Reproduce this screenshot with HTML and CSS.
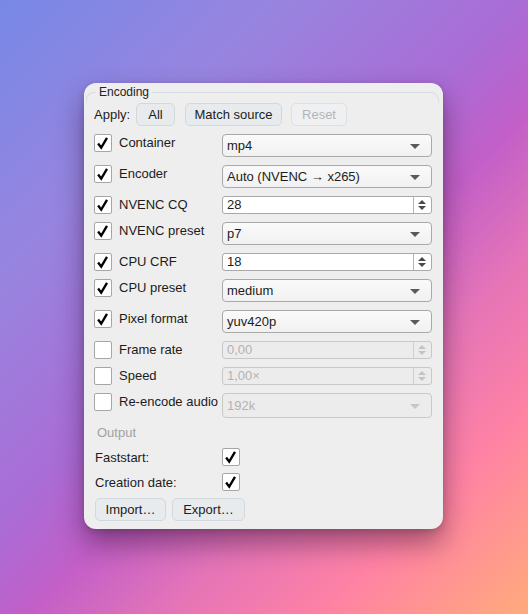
FILE: index.html
```html
<!DOCTYPE html>
<html lang="en">
<head>
    <meta charset="UTF-8">
    <meta name="viewport" content="width=device-width, initial-scale=1.0">
    <title>Encoding</title>
    <link rel="stylesheet" href="styles.css">
</head>
<body>
    <div class="panel">
        <div class="group-head">
            <span class="group-line left"></span>
            <span class="group-title">Encoding</span>
            <span class="group-line right"></span>
        </div>

        <div class="apply-row">
            <span class="apply-label">Apply:</span>
            <button class="btn btn-all">All</button>
            <button class="btn btn-match">Match source</button>
            <button class="btn btn-reset" disabled>Reset</button>
        </div>

        <div class="fields">
            <div class="field">
                <span class="check"><svg viewBox="0 0 18 18"><polyline points="3.5,9.5 7,14.3 13.5,3.3"/></svg></span>
                <span class="field-label">Container</span>
                <div class="combo">mp4</div>
            </div>
            <div class="field">
                <span class="check"><svg viewBox="0 0 18 18"><polyline points="3.5,9.5 7,14.3 13.5,3.3"/></svg></span>
                <span class="field-label">Encoder</span>
                <div class="combo">Auto (NVENC → x265)</div>
            </div>
            <div class="field">
                <span class="check"><svg viewBox="0 0 18 18"><polyline points="3.5,9.5 7,14.3 13.5,3.3"/></svg></span>
                <span class="field-label">NVENC CQ</span>
                <div class="spin"><span class="spin-value">28</span><span class="spin-arrows"></span></div>
            </div>
            <div class="field">
                <span class="check"><svg viewBox="0 0 18 18"><polyline points="3.5,9.5 7,14.3 13.5,3.3"/></svg></span>
                <span class="field-label">NVENC preset</span>
                <div class="combo">p7</div>
            </div>
            <div class="field">
                <span class="check"><svg viewBox="0 0 18 18"><polyline points="3.5,9.5 7,14.3 13.5,3.3"/></svg></span>
                <span class="field-label">CPU CRF</span>
                <div class="spin"><span class="spin-value">18</span><span class="spin-arrows"></span></div>
            </div>
            <div class="field">
                <span class="check"><svg viewBox="0 0 18 18"><polyline points="3.5,9.5 7,14.3 13.5,3.3"/></svg></span>
                <span class="field-label">CPU preset</span>
                <div class="combo">medium</div>
            </div>
            <div class="field">
                <span class="check"><svg viewBox="0 0 18 18"><polyline points="3.5,9.5 7,14.3 13.5,3.3"/></svg></span>
                <span class="field-label">Pixel format</span>
                <div class="combo">yuv420p</div>
            </div>
            <div class="field">
                <span class="check"></span>
                <span class="field-label">Frame rate</span>
                <div class="spin disabled"><span class="spin-value">0,00</span><span class="spin-arrows"></span></div>
            </div>
            <div class="field">
                <span class="check"></span>
                <span class="field-label">Speed</span>
                <div class="spin disabled"><span class="spin-value">1,00×</span><span class="spin-arrows"></span></div>
            </div>
            <div class="field">
                <span class="check"></span>
                <span class="field-label">Re-encode audio</span>
                <div class="combo tall disabled">192k</div>
            </div>
        </div>

        <div class="section-title">Output</div>
        <div class="out-row">
            <span class="out-label">Faststart:</span>
            <span class="check"><svg viewBox="0 0 18 18"><polyline points="3.5,9.5 7,14.3 13.5,3.3"/></svg></span>
        </div>
        <div class="out-row">
            <span class="out-label">Creation date:</span>
            <span class="check"><svg viewBox="0 0 18 18"><polyline points="3.5,9.5 7,14.3 13.5,3.3"/></svg></span>
        </div>

        <div class="bottom-row">
            <button class="btn btn-import">Import…</button>
            <button class="btn btn-export">Export…</button>
        </div>
    </div>
</body>
</html>
```

FILE: styles.css
```css
/* Page */
body {
    margin: 0;
    padding: 83px 0 0 84px;
    width: 528px;
    height: 614px;
    box-sizing: border-box;
    overflow: hidden;
    font-family: "Liberation Sans", Arial, sans-serif;
    font-size: 13px;
    color: #1c1c1c;
    background: linear-gradient(135deg, #7888e6 0%, #9785e0 24%, #aa6cd6 46%, #c25fc8 56%, #e474b8 68%, #ff82a4 82%, #ffab7c 100%);
}

/* Panel */
.panel {
    width: 359px;
    height: 446px;
    box-sizing: border-box;
    padding: 1px 11px 0 10px;
    background: #eeeeee;
    border-radius: 12px;
    box-shadow: 0 14px 28px rgba(40, 10, 40, 0.45), 0 2px 6px rgba(0, 0, 0, 0.15);
}

/* Group box header */
.group-head {
    display: flex;
    align-items: flex-start;
    height: 16px;
    margin: 0 -7px 0 -8px;
}

.group-line {
    margin-top: 8px;
    height: 10px;
    border-top: 1px solid #d7dbe0;
}

.group-line.left {
    width: 9px;
    border-left: 1px solid #dadde1;
    border-top-left-radius: 8px;
}

.group-line.right {
    flex: 1;
    border-right: 1px solid #dadde1;
    border-top-right-radius: 8px;
}

.group-title {
    padding: 0 3px;
    font-size: 12px;
    line-height: 16px;
    color: #222;
}

/* Apply row */
.apply-row {
    display: flex;
    align-items: center;
    margin-top: 3px;
    height: 23px;
}

.apply-label {
    width: 42px;
}

.btn {
    height: 23px;
    padding: 0;
    font-family: inherit;
    font-size: 13px;
    color: #1c1c1c;
    background: #e7ebee;
    border: 1px solid #d3d8dc;
    border-radius: 5px;
}

.btn:disabled {
    color: #b4b4b4;
    background: #eef0f2;
    border-color: #dde1e4;
}

.btn-all { width: 39px; }
.btn-match { width: 97px; margin-left: 10px; }
.btn-reset { width: 56px; margin-left: 9px; }

/* Field rows */
.fields {
    display: flex;
    flex-direction: column;
    gap: 8px;
    margin-top: 8px;
}

.field {
    display: flex;
    align-items: flex-start;
}

.check {
    flex: none;
    width: 18px;
    height: 18px;
    box-sizing: border-box;
    background: #ffffff;
    border: 1px solid #a6a6a6;
    border-radius: 2px;
}

.check svg {
    display: block;
    width: 16px;
    height: 16px;
    fill: none;
    stroke: #000;
    stroke-width: 2.6;
}

.field-label {
    width: 103px;
    margin-left: 7px;
    line-height: 18px;
}

.combo,
.spin {
    position: relative;
    width: 210px;
    box-sizing: border-box;
    border: 1px solid #a9a9a9;
    border-radius: 4px;
    padding-left: 4px;
}

.combo {
    height: 23px;
    line-height: 21px;
    background: linear-gradient(#fafafa, #f1f1f1);
}

.combo.tall {
    height: 25px;
    line-height: 23px;
}

.combo::after {
    content: "";
    position: absolute;
    right: 11px;
    top: 50%;
    margin-top: -2px;
    border-left: 5px solid transparent;
    border-right: 5px solid transparent;
    border-top: 5px solid #5a5a5a;
}

.spin {
    display: flex;
    height: 18px;
    line-height: 16px;
    background: #ffffff;
    border-radius: 3px;
    padding-left: 0;
}

.spin-value {
    flex: 1;
    padding-left: 4px;
}

.spin-arrows {
    position: relative;
    width: 17px;
    border-left: 1px solid #b4b4b4;
}

.spin-arrows::before,
.spin-arrows::after {
    content: "";
    position: absolute;
    left: 4px;
    border-left: 4px solid transparent;
    border-right: 4px solid transparent;
}

.spin-arrows::before {
    top: 3px;
    border-bottom: 4px solid #4a4a4a;
}

.spin-arrows::after {
    top: 9px;
    border-top: 4px solid #4a4a4a;
}

.disabled {
    color: #b3b3b3;
    background: #ececec;
    border-color: #c8c8c8;
}

.combo.disabled::after {
    border-top-color: #c6c6c6;
}

.disabled .spin-arrows {
    border-left-color: #cfcfcf;
}

.disabled .spin-arrows::before {
    border-bottom-color: #c4c4c4;
}

.disabled .spin-arrows::after {
    border-top-color: #c4c4c4;
}

/* Output section */
.section-title {
    margin: 7px 0 0 3px;
    line-height: 16px;
    color: #a2a2a2;
}

.out-row {
    display: flex;
    align-items: center;
    margin-top: 7px;
}

.out-label {
    width: 127px;
    margin-left: 1px;
}

.bottom-row {
    display: flex;
    gap: 6px;
    margin: 7px 0 0 1px;
}

.btn-import { width: 71px; }
.btn-export { width: 73px; }
```
